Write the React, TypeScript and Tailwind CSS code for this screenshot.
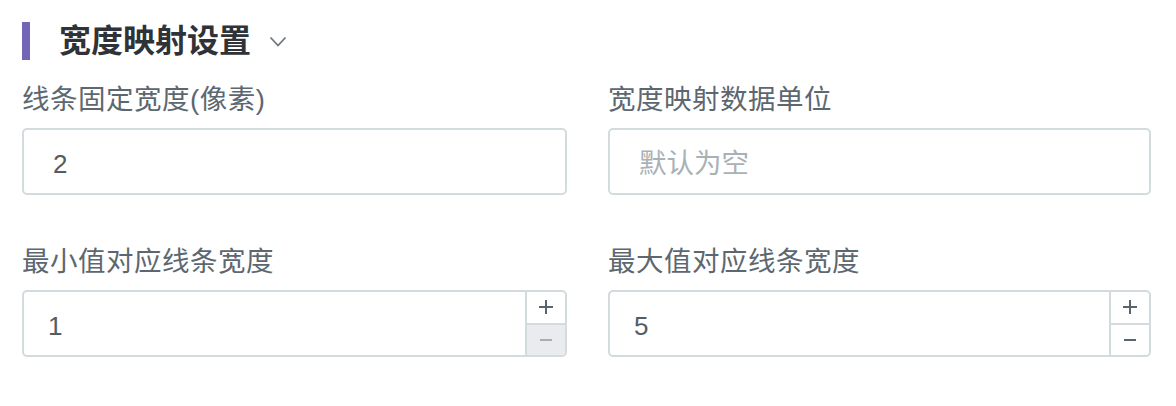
import React from "react";

const font = "font-['Liberation_Sans','Noto_Sans_CJK_SC',sans-serif]";

function Field({ label, children }: { label: string; children: React.ReactNode }) {
  return (
    <div className="flex flex-col">
      <div className="h-[36px] leading-[36px] text-[27.5px] text-[#5d6770] tracking-[0.5px]">{label}</div>
      <div className="mt-[10px]">{children}</div>
    </div>
  );
}

function TextInput({ value, placeholder }: { value?: string; placeholder?: string }) {
  return (
    <div className="h-[67px] border-2 border-[#d3dbde] rounded-[5px] bg-white flex items-center pl-[29px] pt-[5px]">
      {value ? (
        <span className="text-[26px] text-[#545c63]">{value}</span>
      ) : (
        <span className="text-[27.5px] text-[#a9b1b6]">{placeholder}</span>
      )}
    </div>
  );
}

function NumberInput({ value, minDisabled }: { value: string; minDisabled?: boolean }) {
  return (
    <div className="h-[67px] border-2 border-[#d3dbde] rounded-[5px] bg-white flex overflow-hidden">
      <div className="flex-1 flex items-center pl-[24px] pt-[5px]">
        <span className="text-[26px] text-[#545c63]">{value}</span>
      </div>
      <div className="w-[40px] border-l-2 border-[#d3dbde] flex flex-col">
        <div className="flex-1 flex items-center justify-center border-b-2 border-[#d3dbde]">
          <svg width="16" height="16" viewBox="0 0 16 16">
            <path d="M8 1v14M1 8h14" stroke="#5a646c" strokeWidth="2" />
          </svg>
        </div>
        <div className={`flex-1 flex items-center justify-center ${minDisabled ? "bg-[#e9ebee]" : ""}`}>
          <svg width="14" height="4" viewBox="0 0 14 4">
            <path d="M1 2h12" stroke={minDisabled ? "#a7adb2" : "#5a646c"} strokeWidth="2" />
          </svg>
        </div>
      </div>
    </div>
  );
}

export default function App() {
  return (
    <div className={`w-[1176px] h-[406px] bg-white pt-[22px] pl-[22px] ${font}`}>
      <div className="h-[38px] flex items-center">
        <div className="w-[8px] h-[38px] bg-[#7466b6]" />
        <div className="ml-[29px] text-[32px] font-bold text-[#2f3338] leading-none">宽度映射设置</div>
        <svg className="ml-[18px]" width="18" height="11" viewBox="0 0 18 11">
          <path d="M1.5 1.5l7.5 8 7.5-8" fill="none" stroke="#6f777e" strokeWidth="1.8" />
        </svg>
      </div>
      <div className="mt-[22px] grid grid-cols-[545px_543px] gap-x-[41px] gap-y-[49px]">
        <Field label="线条固定宽度(像素)">
          <TextInput value="2" />
        </Field>
        <Field label="宽度映射数据单位">
          <TextInput placeholder="默认为空" />
        </Field>
        <Field label="最小值对应线条宽度">
          <NumberInput value="1" minDisabled />
        </Field>
        <Field label="最大值对应线条宽度">
          <NumberInput value="5" />
        </Field>
      </div>
    </div>
  );
}
